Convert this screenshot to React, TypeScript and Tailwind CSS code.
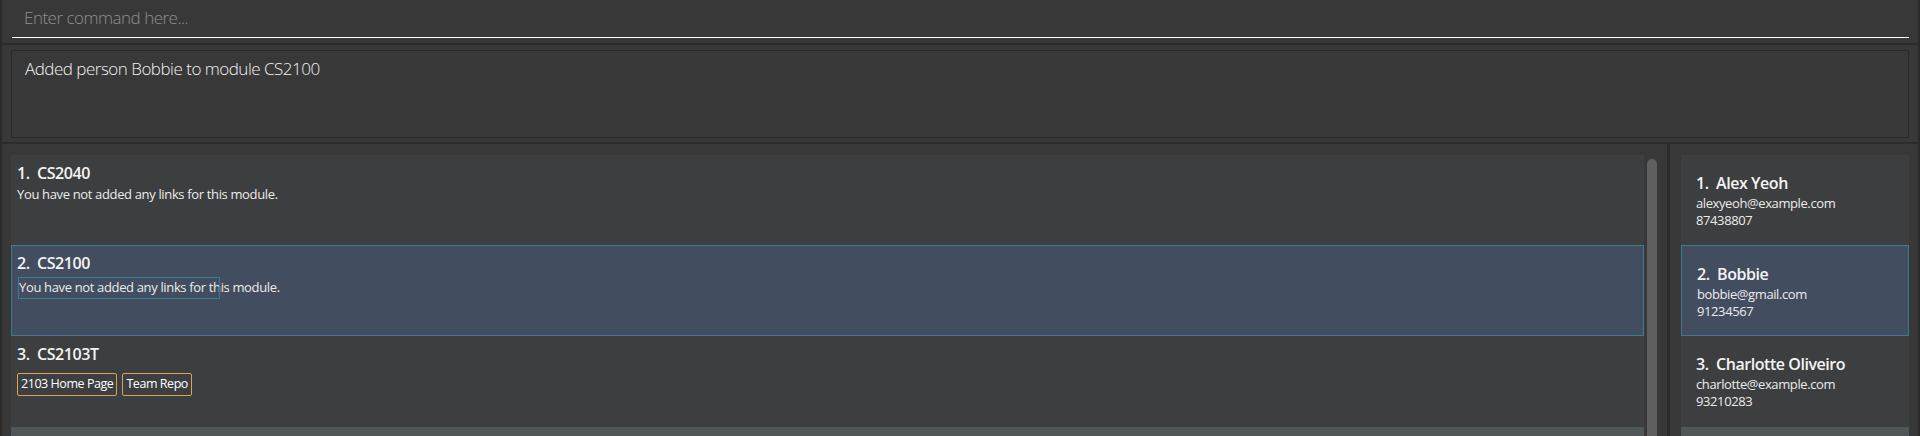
import React from "react";

const modules = [
  { title: "CS2040", links: [] as string[] },
  { title: "CS2100", links: [] as string[], selected: true },
  { title: "CS2103T", links: ["2103 Home Page", "Team Repo"] },
];

const persons = [
  { name: "Alex Yeoh", email: "alexyeoh@example.com", phone: "87438807" },
  { name: "Bobbie", email: "bobbie@gmail.com", phone: "91234567", selected: true },
  { name: "Charlotte Oliveiro", email: "charlotte@example.com", phone: "93210283" },
];

const heights = ["h-[90px]", "h-[91px]", "h-[91px]"];

function ModuleCard({ i }: { i: number }) {
  const m = modules[i];
  const sel = !!m.selected;
  return (
    <div
      className={
        heights[i] +
        " shrink-0 " +
        (sel
          ? "bg-[#424d5f] border border-[#3e7b91] pl-[5px] pt-[6px]"
          : "bg-[#3c3e3f] pl-[6px] pt-[7px]")
      }
    >
      <div className="text-[16px] leading-[22px] font-semibold tracking-[-0.45px] text-[#f4f4f4] whitespace-pre">
        {i + 1}.  {m.title}
      </div>
      {m.links.length === 0 ? (
        <div className={"relative text-[13px] leading-[18px] tracking-[-0.35px] text-[#ececec] " + (sel ? "mt-[4px] ml-[2px]" : "mt-[1px]")}>
          You have not added any links for this module.
          {sel && (
            <div className="absolute left-[-1px] top-[-1px] w-[202px] h-[22px] border border-[#3e7b91]" />
          )}
        </div>
      ) : (
        <div className="flex gap-[5px] mt-[8px]">
          {m.links.map((l) => (
            <div
              key={l}
              className="h-[23px] border border-[#d4a554] rounded-[2px] px-[3px] pt-[1px] text-[12.5px] leading-[18px] tracking-[-0.45px] text-white"
            >
              {l}
            </div>
          ))}
        </div>
      )}
    </div>
  );
}

function PersonCard({ i }: { i: number }) {
  const p = persons[i];
  const sel = !!p.selected;
  return (
    <div
      className={
        heights[i] +
        " shrink-0 " +
        (sel
          ? "bg-[#424d5f] border border-[#3e7b91] pl-[15px] pt-[17px]"
          : "bg-[#3c3e3f] pl-[15px] pt-[17px]")
      }
    >
      <div className="text-[16px] leading-[22px] font-semibold tracking-[-0.45px] text-[#f4f4f4] whitespace-pre">
        {i + 1}.  {p.name}
      </div>
      <div className="mt-[1px] text-[13px] leading-[17px] tracking-[-0.4px] text-[#ececec]">{p.email}</div>
      <div className="text-[13px] leading-[17px] tracking-[-0.4px] text-[#ececec]">{p.phone}</div>
    </div>
  );
}

export default function App() {
  return (
    <div className="w-[1920px] h-[436px] overflow-hidden bg-[#2b2b2b] px-[2px] flex flex-col gap-[2px] font-['Open_Sans',sans-serif]">
      {/* command box */}
      <div className="h-[43px] shrink-0 bg-[#383838] pl-[10px] pr-[9px]">
        <div className="h-[38px] border-b border-white pl-[12px] pt-[6px] text-[17px] leading-[23px] font-light tracking-[-0.5px] text-[#8f8f8f]">
          Enter command here...
        </div>
      </div>
      {/* result display */}
      <div className="h-[97px] shrink-0 bg-[#383838] px-[9px] pt-[5px]">
        <div className="h-[88px] border border-[#2a2a2a] pl-[13px] pt-[6px] text-[17px] leading-[23px] font-light tracking-[-0.5px] text-[#f2f2f2]">
          Added person Bobbie to module CS2100
        </div>
      </div>
      {/* lists */}
      <div className="flex-1 flex gap-[3px] min-h-0">
        <div className="flex-1 bg-[#383838] pl-[9px] pr-[10px] pt-[11px] flex gap-[3px] overflow-hidden">
          <div className="flex-1 flex flex-col">
            {modules.map((_, i) => (
              <ModuleCard key={i} i={i} />
            ))}
            <div className="flex-1 bg-[#515658]" />
          </div>
          <div className="w-[10px] mt-[4px] h-[400px] rounded-[5px] bg-[#5f5f5f]" />
        </div>
        <div className="w-[248px] bg-[#383838] pl-[11px] pr-[9px] pt-[11px] flex flex-col overflow-hidden">
          {persons.map((_, i) => (
            <PersonCard key={i} i={i} />
          ))}
          <div className="flex-1 bg-[#515658]" />
        </div>
      </div>
    </div>
  );
}
